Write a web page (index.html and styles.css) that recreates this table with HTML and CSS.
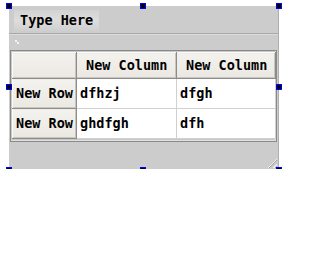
FILE: index.html
```html
<!DOCTYPE html>
<html>
<head>
<meta charset="utf-8">
<link rel="stylesheet" href="styles.css">
</head>
<body>
<div class="panel">
  <div class="titlebar"><span class="title">Type Here</span></div>
  <div class="toolbar"><span class="dots"><i></i><i></i></span></div>
  <div class="frame">
    <table class="grid">
      <colgroup><col class="c0"><col class="c1"><col class="c2"></colgroup>
      <tr class="head">
        <th class="corner"></th>
        <th>New Column</th>
        <th>New Column</th>
      </tr>
      <tr>
        <th class="rowh">New Row</th>
        <td>dfhzj</td>
        <td>dfgh</td>
      </tr>
      <tr>
        <th class="rowh">New Row</th>
        <td>ghdfgh</td>
        <td>dfh</td>
      </tr>
    </table>
  </div>
  <div class="grip"></div>
  <span class="h h-tl"></span><span class="h h-tc"></span><span class="h h-tr"></span>
  <span class="h h-ml"></span><span class="h h-mr"></span>
  <span class="h h-bl"></span><span class="h h-bc"></span><span class="h h-br"></span>
</div>
</body>
</html>
```
FILE: styles.css
```css
html, body { margin: 0; padding: 0; background: #fff; }
body { font-family: "DejaVu Sans Mono", monospace; font-weight: bold; font-size: 13.5px; color: #000; }

.panel {
  position: relative;
  margin: 6px 0 0 9px;
  width: 270px;
  height: 163px;
  background: #cccccc;
  border-right: 1px solid #b0b0b0;
  box-sizing: border-box;
  display: flex;
  flex-direction: column;
}

.titlebar {
  height: 28px;
  padding: 4px 0 0 5px;
  box-sizing: border-box;
  border-bottom: 1px solid #a8a8a8;
}
.title {
  display: inline-block;
  height: 21px;
  line-height: 21px;
  padding: 0 6px;
  background: linear-gradient(#d3d3d3, #dddddd 50%, #cfcfcf);
}

.toolbar {
  height: 16px;
  border-top: 1px solid #dcdcdc;
  box-sizing: border-box;
  position: relative;
}
.dots i {
  position: absolute;
  width: 2px; height: 2px;
  background: #f4f4f4;
}
.dots i:first-child { left: 6px; top: 5px; }
.dots i:last-child { left: 8px; top: 7px; }

.frame {
  margin: 0 0 0 1px;
  width: 267px;
  height: 92px;
  border: 1px solid #8a8a8a;
  box-sizing: border-box;
  background: #c8c8c8;
  padding: 1px;
  box-shadow: inset -1px -1px 0 #e0e0e0;
}

.grid {
  border-collapse: collapse;
  table-layout: fixed;
  width: 263px;
  background: #fff;
}
.c0 { width: 64px; }
.c1 { width: 100px; }
.c2 { width: 99px; }

.grid th, .grid td {
  padding: 0 0 2px 4px;
  text-align: left;
  white-space: nowrap;
  overflow: hidden;
  font-weight: bold;
}
.grid th {
  background: linear-gradient(#f4f2ee, #ebe8e2);
  border: 1px solid #8c8c8c;
  border-top-color: #fbfbfb;
  border-left-color: #fbfbfb;
  box-shadow: inset -1px -1px 0 #c9c6c0;
}
.grid .head th {
  height: 23px;
  padding-left: 9px;
}
.grid th.corner { padding: 0; height: 25px; }
.grid th.rowh {
  height: 27px;
  padding-left: 3px;
}
.grid td {
  border-right: 1px solid #d0d0d0;
  border-bottom: 1px solid #d0d0d0;
  height: 27px;
  padding-left: 3px;
}

.grip {
  position: absolute;
  right: 1px; bottom: 1px;
  width: 12px; height: 12px;
  background: repeating-linear-gradient(135deg, transparent 0 2px, #f0f0f0 2px 3px, #a0a0a0 3px 4px);
  clip-path: polygon(100% 0, 100% 100%, 0 100%);
}

.h {
  position: absolute;
  width: 4px; height: 4px;
  background: #000;
  border: 1px solid #0000ff;
}
.h-tl { left: -3px; top: -3px; }
.h-tc { left: 131px; top: -3px; }
.h-tr { right: -4px; top: -3px; }
.h-ml { left: -3px; top: 78px; }
.h-mr { right: -4px; top: 78px; }
.h-bl { left: -3px; bottom: -4px; }
.h-bc { left: 131px; bottom: -4px; }
.h-br { right: -4px; bottom: -4px; }
```
